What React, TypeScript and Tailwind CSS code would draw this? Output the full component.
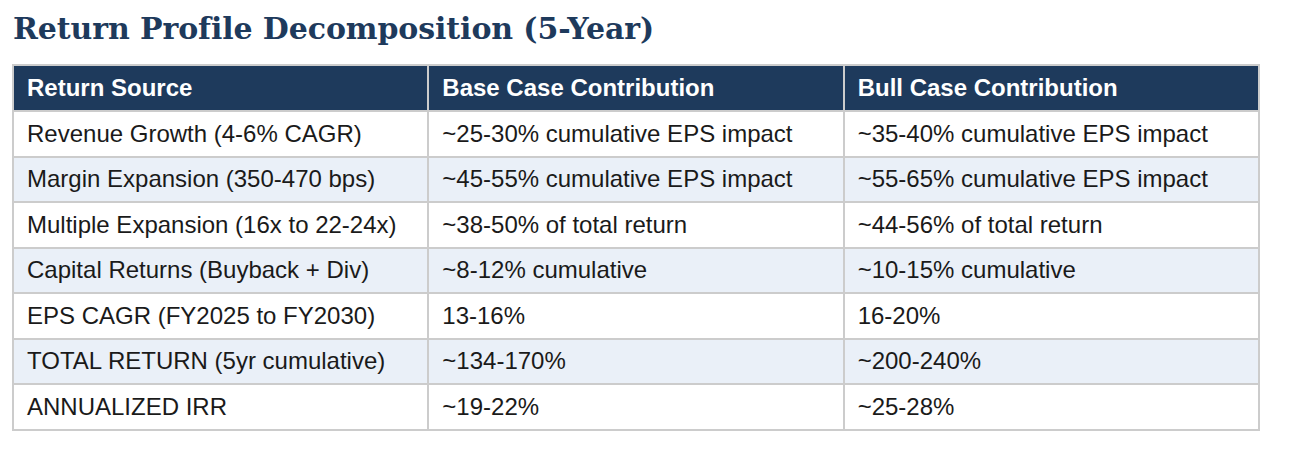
import React from 'react';

const rows: [string, string, string][] = [
  ['Revenue Growth (4-6% CAGR)', '~25-30% cumulative EPS impact', '~35-40% cumulative EPS impact'],
  ['Margin Expansion (350-470 bps)', '~45-55% cumulative EPS impact', '~55-65% cumulative EPS impact'],
  ['Multiple Expansion (16x to 22-24x)', '~38-50% of total return', '~44-56% of total return'],
  ['Capital Returns (Buyback + Div)', '~8-12% cumulative', '~10-15% cumulative'],
  ['EPS CAGR (FY2025 to FY2030)', '13-16%', '16-20%'],
  ['TOTAL RETURN (5yr cumulative)', '~134-170%', '~200-240%'],
  ['ANNUALIZED IRR', '~19-22%', '~25-28%'],
];

export default function App() {
  return (
    <div className="w-[1290px] h-[460px] bg-white pt-[10px] pl-[12px]">
      <h2 className="pl-[1px] text-[30px] leading-[38px] font-bold text-[#1e3a5c] font-['DejaVu_Serif',serif] tracking-[-0.1px]">
        Return Profile Decomposition (5-Year)
      </h2>
      <table className="mt-[16px] w-[1248px] table-fixed border-collapse border-2 border-[#cccccc] font-['Liberation_Sans',Arial,sans-serif] text-[24px] leading-[28px]">
        <thead>
          <tr className="bg-[#1e3a5c] text-white">
            <th className="h-[46px] border-2 border-[#cccccc] px-[13px] text-left font-bold">Return Source</th>
            <th className="h-[46px] border-2 border-[#cccccc] px-[13px] text-left font-bold">Base Case Contribution</th>
            <th className="h-[46px] border-2 border-[#cccccc] px-[13px] text-left font-bold">Bull Case Contribution</th>
          </tr>
        </thead>
        <tbody>
          {rows.map((r, i) => (
            <tr key={r[0]} className={i % 2 === 1 ? 'bg-[#eaf0f8]' : 'bg-white'}>
              {r.map((c, j) => (
                <td key={j} className="h-[45.5px] border-2 border-[#cccccc] px-[13px] text-[#1a1a1a]">
                  {c}
                </td>
              ))}
            </tr>
          ))}
        </tbody>
      </table>
    </div>
  );
}
